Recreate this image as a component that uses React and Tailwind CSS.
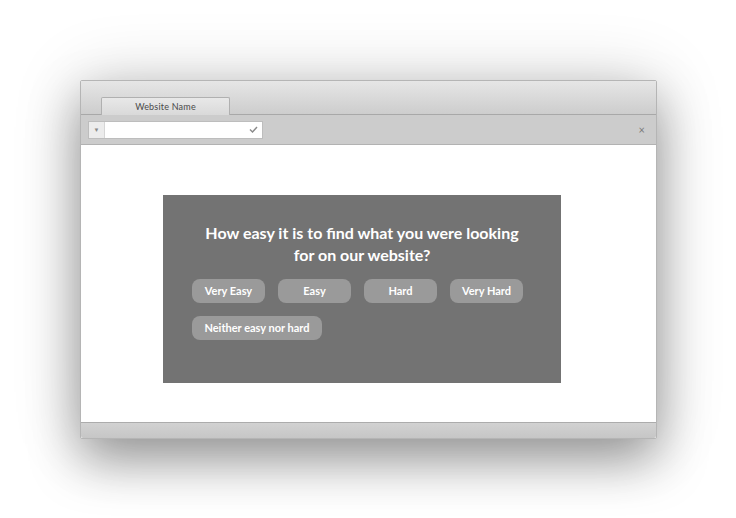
export default function App() {
  const font = { fontFamily: "Lato, 'Open Sans', Arial, sans-serif" };
  return (
    <div className="w-[736px] h-[518px] bg-white overflow-hidden pt-[80px] pl-[80px]" style={font}>
      <div className="w-[577px] h-[359px] flex flex-col border border-[#b5b5b5] rounded-[2px] shadow-[0_22px_50px_rgba(0,0,0,0.36),0_0_70px_rgba(0,0,0,0.16)] bg-white">
        {/* tab strip */}
        <div className="h-[34px] flex items-end bg-gradient-to-b from-[#e6e6e6] to-[#cdcdcd] border-b border-[#a8a8a8] pl-[20px]">
          <div className="w-[129px] h-[18px] -mb-px bg-gradient-to-b from-[#e8e8e8] to-[#d9d9d9] border border-b-0 border-[#b0b0b0] rounded-t-[2px] flex items-center justify-center text-[9px] text-[#4a4a4a] tracking-[0.2px]">
            Website Name
          </div>
        </div>
        {/* toolbar */}
        <div className="h-[30px] bg-[#cccccc] border-b border-[#b2b2b2] flex items-center pl-[7px] pr-[11px]">
          <div className="flex h-[18px] w-[175px] border border-[#bdbdbd] bg-white">
            <div className="w-[16px] bg-[#ececec] border-r border-[#d6d6d6] flex items-center justify-center text-[6px] text-[#888]">▼</div>
            <div className="flex-1 flex items-center justify-end pr-[4px]">
              <svg width="9" height="7" viewBox="0 0 9 7"><path d="M1 3.5 L3.5 6 L8 1" stroke="#8a8a8a" strokeWidth="1.4" fill="none" /></svg>
            </div>
          </div>
          <div className="flex-1" />
          <div className="text-[11px] leading-none text-[#7a7a7a]">×</div>
        </div>
        {/* content */}
        <div className="flex-1 bg-white pt-[50px] pl-[82px]">
          <div className="w-[398px] h-[188px] bg-[#737373] pt-[27px] px-[29px]">
            <div className="text-white font-bold text-[16px] leading-[22px] text-center">
              How easy it is to find what you were looking<br />for on our website?
            </div>
            <div className="mt-[13px] flex flex-wrap gap-x-[13px] gap-y-[13px] w-[340px]">
              {["Very Easy", "Easy", "Hard", "Very Hard"].map((t) => (
                <div key={t} className="w-[73px] h-[24px] rounded-[8px] bg-[#9a9a9a] text-white text-[11px] font-bold flex items-center justify-center">{t}</div>
              ))}
              <div className="w-[130px] h-[24px] rounded-[8px] bg-[#9a9a9a] text-white text-[11px] font-bold flex items-center justify-center">Neither easy nor hard</div>
            </div>
          </div>
        </div>
        {/* footer */}
        <div className="h-[16px] bg-gradient-to-b from-[#d2d2d2] to-[#c6c6c6] border-t border-[#acacac] rounded-b-[2px]" />
      </div>
    </div>
  );
}
